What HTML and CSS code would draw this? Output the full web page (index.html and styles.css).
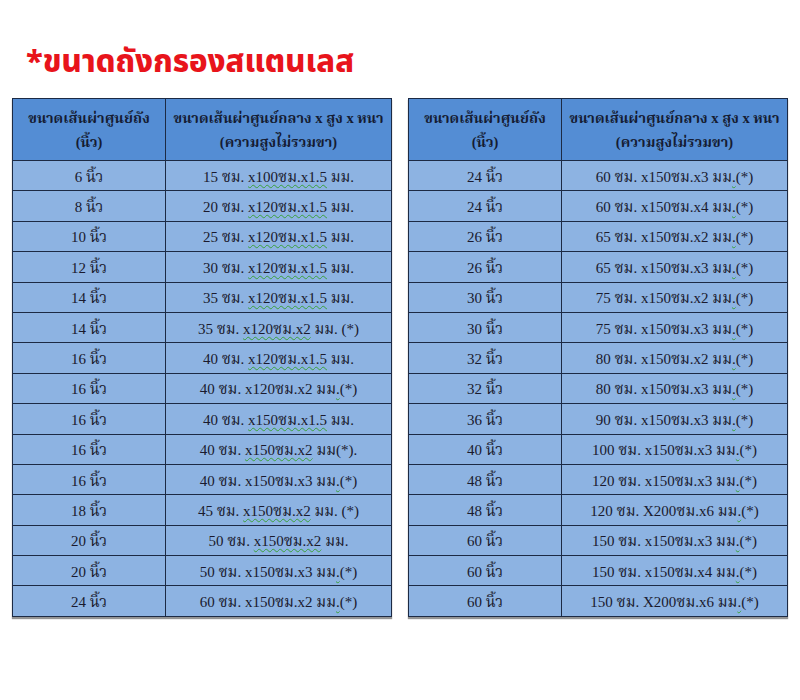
FILE: index.html
```html
<!DOCTYPE html>
<html lang="th">
<head>
<meta charset="utf-8">
<link rel="stylesheet" href="styles.css">
</head>
<body>
<h1 class="title">*ขนาดถังกรองสแตนเลส</h1>
<div class="tables">
<table class="sz">
<thead>
<tr><th class="c1">ขนาดเส้นผ่าศูนย์ถัง<br>(นิ้ว)</th><th class="c2">ขนาดเส้นผ่าศูนย์กลาง x สูง x หนา<br>(ความสูงไม่รวมขา)</th></tr>
</thead>
<tbody>
<tr><td>6 นิ้ว</td><td>15 ซม. <span class="sp">x100ซม.x1.5</span> มม.</td></tr>
<tr><td>8 นิ้ว</td><td>20 ซม. <span class="sp">x120ซม.x1.5</span> มม.</td></tr>
<tr><td>10 นิ้ว</td><td>25 ซม. <span class="sp">x120ซม.x1.5</span> มม.</td></tr>
<tr><td>12 นิ้ว</td><td>30 ซม. <span class="sp">x120ซม.x1.5</span> มม.</td></tr>
<tr><td>14 นิ้ว</td><td>35 ซม. <span class="sp">x120ซม.x1.5</span> มม.</td></tr>
<tr><td>14 นิ้ว</td><td>35 ซม. <span class="sp">x120ซม.x2</span> มม. (*)</td></tr>
<tr><td>16 นิ้ว</td><td>40 ซม. <span class="sp">x120ซม.x1.5</span> มม.</td></tr>
<tr><td>16 นิ้ว</td><td>40 ซม. x120ซม.x2 มม<span class="sp">.</span>(*)</td></tr>
<tr><td>16 นิ้ว</td><td>40 ซม. <span class="sp">x150ซม.x1.5</span> มม.</td></tr>
<tr><td>16 นิ้ว</td><td>40 ซม. <span class="sp">x150ซม.x2</span> มม(*).</td></tr>
<tr><td>16 นิ้ว</td><td>40 ซม. x150ซม.x3 มม<span class="sp">.</span>(*)</td></tr>
<tr><td>18 นิ้ว</td><td>45 ซม. <span class="sp">x150ซม.x2</span> มม. (*)</td></tr>
<tr><td>20 นิ้ว</td><td>50 ซม. <span class="sp">x150ซม.x2</span> มม.</td></tr>
<tr><td>20 นิ้ว</td><td>50 ซม. x150ซม.x3 มม<span class="sp">.</span>(*)</td></tr>
<tr><td>24 นิ้ว</td><td>60 ซม. x150ซม.x2 มม<span class="sp">.</span>(*)</td></tr>
</tbody>
</table>
<table class="sz">
<thead>
<tr><th class="c1">ขนาดเส้นผ่าศูนย์ถัง<br>(นิ้ว)</th><th class="c2">ขนาดเส้นผ่าศูนย์กลาง x สูง x หนา<br>(ความสูงไม่รวมขา)</th></tr>
</thead>
<tbody>
<tr><td>24 นิ้ว</td><td>60 ซม. x150ซม.x3 มม<span class="sp">.</span>(*)</td></tr>
<tr><td>24 นิ้ว</td><td>60 ซม. x150ซม.x4 มม<span class="sp">.</span>(*)</td></tr>
<tr><td>26 นิ้ว</td><td>65 ซม. x150ซม.x2 มม<span class="sp">.</span>(*)</td></tr>
<tr><td>26 นิ้ว</td><td>65 ซม. x150ซม.x3 มม<span class="sp">.</span>(*)</td></tr>
<tr><td>30 นิ้ว</td><td>75 ซม. x150ซม.x2 มม<span class="sp">.</span>(*)</td></tr>
<tr><td>30 นิ้ว</td><td>75 ซม. x150ซม.x3 มม<span class="sp">.</span>(*)</td></tr>
<tr><td>32 นิ้ว</td><td>80 ซม. x150ซม.x2 มม<span class="sp">.</span>(*)</td></tr>
<tr><td>32 นิ้ว</td><td>80 ซม. x150ซม.x3 มม<span class="sp">.</span>(*)</td></tr>
<tr><td>36 นิ้ว</td><td>90 ซม. x150ซม.x3 มม<span class="sp">.</span>(*)</td></tr>
<tr><td>40 นิ้ว</td><td>100 ซม. x150ซม.x3 มม<span class="sp">.</span>(*)</td></tr>
<tr><td>48 นิ้ว</td><td>120 ซม. x150ซม.x3 มม<span class="sp">.</span>(*)</td></tr>
<tr><td>48 นิ้ว</td><td>120 ซม. X200ซม.x6 มม<span class="sp">.</span>(*)</td></tr>
<tr><td>60 นิ้ว</td><td>150 ซม. x150ซม.x3 มม<span class="sp">.</span>(*)</td></tr>
<tr><td>60 นิ้ว</td><td>150 ซม. x150ซม.x4 มม<span class="sp">.</span>(*)</td></tr>
<tr><td>60 นิ้ว</td><td>150 ซม. X200ซม.x6 มม<span class="sp">.</span>(*)</td></tr>
</tbody>
</table>
</div>
</body>
</html>
```
FILE: styles.css
```css
html, body {
  margin: 0;
  padding: 0;
  background: #ffffff;
}
body {
  width: 800px;
  height: 700px;
  overflow: hidden;
}
.title {
  margin: 0;
  padding: 45px 0 0 26px;
  height: 53px;
  box-sizing: content-box;
  font-family: "Noto Sans Thai", "Noto Sans", "DejaVu Sans", sans-serif;
  font-weight: 800;
  font-size: 31px;
  line-height: 36px;
  color: #e8141b;
}
.tables {
  display: flex;
  gap: 16px;
  padding-left: 12px;
}
.sz {
  width: 380px;
  border-collapse: collapse;
  font-family: "Liberation Serif", "Noto Serif Thai", "Noto Sans Thai", serif;
  color: #1a1a2e;
  box-shadow: 0 2px 1px rgba(60, 60, 60, 0.55);
}
.sz th, .sz td {
  border: 1px solid #1c2a44;
  text-align: center;
  padding: 0;
}
.sz th {
  background: #548dd4;
  height: 61px;
  font-weight: 700;
  font-size: 14.5px;
  line-height: 24px;
  color: #151c33;
}
.sz .c1 {
  width: 152px;
}
.sz td {
  background: #8db3e2;
  height: 27.4px;
  font-size: 15px;
  line-height: 18px;
  padding-top: 2px;
  box-sizing: content-box;
}
.sp {
  text-decoration: underline wavy #3aa03a;
  text-decoration-thickness: 1px;
  text-underline-offset: 2px;
}
```
